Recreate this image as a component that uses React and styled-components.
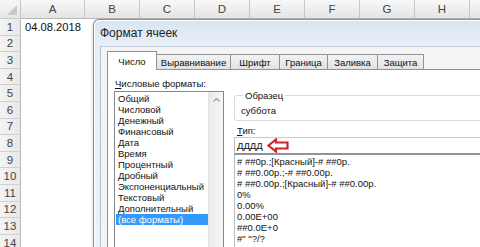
import React from 'react';
import styled, { createGlobalStyle } from 'styled-components';

const GlobalStyle = createGlobalStyle`
  html, body {
    margin: 0;
    padding: 0;
    background: #fff;
    overflow: hidden;
  }
`;

const COLUMNS = [
  { label: 'A', width: 64 },
  { label: 'B', width: 55 },
  { label: 'C', width: 55 },
  { label: 'D', width: 55 },
  { label: 'E', width: 55 },
  { label: 'F', width: 55 },
  { label: 'G', width: 55 },
  { label: 'H', width: 55 },
  { label: '', width: 55 },
];

const ROWS = Array.from({ length: 14 }, (_, i) => i + 1);

const FORMATS = [
  'Общий',
  'Числовой',
  'Денежный',
  'Финансовый',
  'Дата',
  'Время',
  'Процентный',
  'Дробный',
  'Экспоненциальный',
  'Текстовый',
  'Дополнительный',
  '(все форматы)',
];

const TYPES = [
  '# ##0р.;[Красный]-# ##0р.',
  '# ##0.00р.;-# ##0.00р.',
  '# ##0.00р.;[Красный]-# ##0.00р.',
  '0%',
  '0.00%',
  '0.00E+00',
  '##0.0E+0',
  '#" "?/?',
];

const TABS = [
  { label: 'Число', width: 50 },
  { label: 'Выравнивание', width: 75 },
  { label: 'Шрифт', width: 50 },
  { label: 'Граница', width: 49 },
  { label: 'Заливка', width: 51 },
  { label: 'Защита', width: 47 },
];

function App() {
  return (
    <>
      <GlobalStyle />
      <Sheet>
        <HeaderRow>
          <Corner />
          {COLUMNS.map((c, i) => (
            <ColHead key={i} $w={c.width}>
              {c.label}
            </ColHead>
          ))}
        </HeaderRow>
        {ROWS.map((r) => (
          <Row key={r}>
            <RowHead>{r}</RowHead>
            <Cell $w={COLUMNS[0].width}>{r === 1 ? '04.08.2018' : ''}</Cell>
          </Row>
        ))}

        <Dialog>
          <TitleBar>Формат ячеек</TitleBar>
          <Body>
            <TabList>
              {TABS.map((t, i) => (
                <Tab key={t.label} $w={t.width} $active={i === 0}>
                  {t.label}
                </Tab>
              ))}
            </TabList>
            <Panel>
              <LeftCol>
                <Label>
                  <u>Ч</u>исловые форматы:
                </Label>
                <ListBox>
                  <Items>
                    {FORMATS.map((f, i) => (
                      <Item key={f} $selected={i === FORMATS.length - 1}>
                        {f}
                      </Item>
                    ))}
                  </Items>
                  <ScrollBar>
                    <svg width="7" height="4" viewBox="0 0 7 4">
                      <path d="M0.5 3.5 L3.5 0.5 L6.5 3.5" fill="none" stroke="#9a9a9a" strokeWidth="1.2" />
                    </svg>
                  </ScrollBar>
                </ListBox>
              </LeftCol>
              <RightCol>
                <Group>
                  <Legend>Образец</Legend>
                  <Sample>суббота</Sample>
                </Group>
                <TypeLabel>
                  <u>Т</u>ип:
                </TypeLabel>
                <TypeInput>
                  <span>ДДДД</span>
                  <svg width="22" height="15" viewBox="0 0 22 15">
                    <path
                      d="M1.5 7.5 L9 1.5 L9 4.5 L20.5 4.5 L20.5 10.5 L9 10.5 L9 13.5 Z"
                      fill="#fff"
                      stroke="#d3202b"
                      strokeWidth="2.2"
                      strokeLinejoin="miter"
                    />
                  </svg>
                </TypeInput>
                <TypeList>
                  {TYPES.map((t) => (
                    <TypeItem key={t}>{t}</TypeItem>
                  ))}
                </TypeList>
              </RightCol>
            </Panel>
          </Body>
        </Dialog>
      </Sheet>
    </>
  );
}

const Sheet = styled.div`
  position: relative;
  width: 480px;
  height: 247px;
  overflow: hidden;
  background: #fff;
  font-family: 'Liberation Sans', Arial, sans-serif;
`;

const HeaderRow = styled.div`
  display: flex;
  height: 19px;
`;

const Corner = styled.div`
  position: relative;
  width: 21px;
  flex-shrink: 0;
  box-sizing: border-box;
  background: linear-gradient(#f7f7f7, #e6e6e6);
  border-right: 1px solid #c6c6c6;
  border-bottom: 1px solid #c6c6c6;
  &::after {
    content: '';
    position: absolute;
    right: 3px;
    bottom: 3px;
    border-style: solid;
    border-width: 0 0 10px 10px;
    border-color: transparent transparent #c9c9c9 transparent;
  }
`;

const ColHead = styled.div`
  width: ${(p) => p.$w}px;
  flex-shrink: 0;
  box-sizing: border-box;
  display: flex;
  align-items: center;
  justify-content: center;
  background: linear-gradient(#f8f8f8, #e4e4e4);
  border-right: 1px solid #c6c6c6;
  border-bottom: 1px solid #b8b8b8;
  color: #444;
  font-size: 11.5px;
`;

const Row = styled.div`
  display: flex;
  height: 16.6px;
`;

const RowHead = styled.div`
  width: 21px;
  flex-shrink: 0;
  box-sizing: border-box;
  display: flex;
  align-items: center;
  justify-content: center;
  background: linear-gradient(90deg, #f4f4f4, #e8e8e8);
  border-right: 1px solid #b8b8b8;
  border-bottom: 1px solid #d0d0d0;
  color: #444;
  font-size: 11.5px;
`;

const Cell = styled.div`
  width: ${(p) => p.$w}px;
  flex-shrink: 0;
  box-sizing: border-box;
  padding-left: 4px;
  display: flex;
  align-items: center;
  color: #111;
  font-size: 11.2px;
`;

const Dialog = styled.div`
  position: absolute;
  left: 93px;
  top: 19px;
  width: 400px;
  height: 240px;
  box-sizing: border-box;
  padding-left: 6px;
  border-top: 1px solid #8293a8;
  border-left: 1px solid #8293a8;
  border-top-left-radius: 6px;
  background: linear-gradient(#d9e5f3, #e8eff8 26px, #eaeef3 27px, #eef1f5);
  box-shadow: inset 1px 1px 0 #fff, -1px 0 2px rgba(0, 0, 0, 0.12);
  font-family: 'Liberation Sans', Arial, sans-serif;
`;

const TitleBar = styled.div`
  height: 26px;
  display: flex;
  align-items: center;
  font-size: 12px;
  color: #1e1e1e;
`;

const Body = styled.div`
  height: 100%;
  box-sizing: border-box;
  padding: 4px 0 0 6px;
  background: #f4f4f4;
  border-top: 1px solid #c5ced9;
  border-left: 1px solid #b5bfcb;
`;

const TabList = styled.div`
  display: flex;
  align-items: flex-end;
  height: 19px;
  position: relative;
  z-index: 1;
`;

const Tab = styled.div`
  width: ${(p) => p.$w}px;
  height: ${(p) => (p.$active ? 19 : 16)}px;
  box-sizing: border-box;
  display: flex;
  align-items: center;
  justify-content: center;
  padding-top: ${(p) => (p.$active ? 0 : 1)}px;
  border: 1px solid #8d929b;
  border-bottom: ${(p) => (p.$active ? 'none' : '1px solid #8d929b')};
  margin-left: ${(p) => (p.$active ? 0 : -1)}px;
  background: ${(p) => (p.$active ? '#fff' : 'linear-gradient(#f3f3f3, #e2e2e2)')};
  font-size: 9.5px;
  color: #111;
  &:first-child {
    margin-left: 0;
  }
`;

const Panel = styled.div`
  display: flex;
  height: 180px;
  margin-top: -1px;
  box-sizing: border-box;
  padding: 8px 0 0 6px;
  background: #fff;
  border: 1px solid #8d929b;
  border-right: none;
  border-bottom: none;
`;

const LeftCol = styled.div`
  width: 110px;
  flex-shrink: 0;
  display: flex;
  flex-direction: column;
`;

const Label = styled.div`
  height: 13px;
  line-height: 12px;
  padding-left: 1px;
  font-size: 9.5px;
  color: #111;
`;

const ListBox = styled.div`
  flex: 1;
  display: flex;
  box-sizing: border-box;
  border: 1px solid #828790;
  border-bottom: none;
`;

const Items = styled.div`
  flex: 1;
  padding-top: 1px;
`;

const Item = styled.div`
  height: 11px;
  line-height: 11px;
  margin-left: 1px;
  padding-left: 2px;
  font-size: 9.5px;
  white-space: nowrap;
  color: ${(p) => (p.$selected ? '#fff' : '#111')};
  background: ${(p) => (p.$selected ? '#3399ff' : 'transparent')};
`;

const ScrollBar = styled.div`
  width: 15px;
  display: flex;
  justify-content: center;
  padding-top: 6px;
  box-sizing: border-box;
  background: linear-gradient(90deg, #eaeaea, #f6f6f6);
  border-left: 1px solid #e2e2e2;
`;

const RightCol = styled.div`
  flex: 1;
  margin-left: 10px;
  padding-top: 12px;
  display: flex;
  flex-direction: column;
`;

const Group = styled.fieldset`
  margin: 0;
  padding: 4px 0 4px 6px;
  border: 1px solid #d5dde3;
  border-right: none;
  border-radius: 3px 0 0 3px;
`;

const Legend = styled.legend`
  padding: 0 2px;
  margin-left: 2px;
  font-size: 9.5px;
  line-height: 11px;
  color: #111;
`;

const Sample = styled.div`
  font-size: 9.5px;
  line-height: 11px;
  color: #111;
`;

const TypeLabel = styled.div`
  margin-top: 3px;
  height: 13px;
  line-height: 13px;
  padding-left: 3px;
  font-size: 9.5px;
  color: #111;
`;

const TypeInput = styled.div`
  height: 18px;
  box-sizing: border-box;
  display: flex;
  align-items: center;
  gap: 4px;
  padding-left: 2px;
  border-top: 1px solid #c9ccd1;
  border-left: 1px solid #b9bcc2;
  border-bottom: 2px solid #8f9399;
  font-size: 9.5px;
  color: #111;
`;

const TypeList = styled.div`
  flex: 1;
  padding: 1px 0 0 2px;
  border-left: 1px solid #b9bcc2;
`;

const TypeItem = styled.div`
  height: 11px;
  line-height: 11px;
  font-size: 9.5px;
  white-space: nowrap;
  color: #111;
`;

export default App;
